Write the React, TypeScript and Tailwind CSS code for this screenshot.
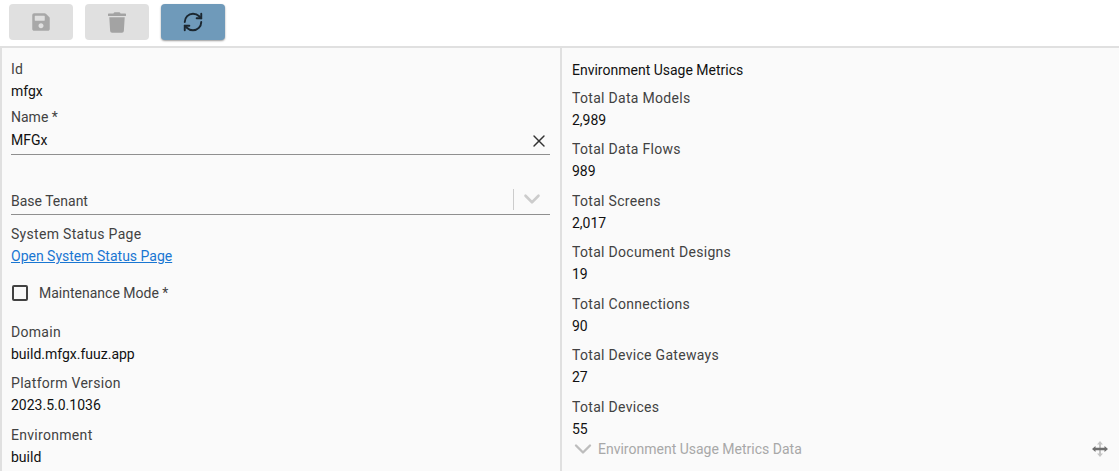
import React from 'react'
import { ChevronDown, RefreshCw, X } from 'lucide-react'

function SaveIcon () {
  return (
    <svg viewBox="0 0 448 512" className="h-[20px] w-[18px] fill-[#a8a8a8]">
      <path d="M433.9 129.9l-83.9-83.9A48 48 0 0 0 316.1 32H48C21.5 32 0 53.5 0 80v352c0 26.5 21.5 48 48 48h352c26.5 0 48-21.5 48-48V163.9a48 48 0 0 0-14.1-34zM224 416c-35.3 0-64-28.7-64-64 0-35.3 28.7-64 64-64s64 28.7 64 64c0 35.3-28.7 64-64 64zm96-304.5V212c0 6.6-5.4 12-12 12H76c-6.6 0-12-5.4-12-12V108c0-6.6 5.4-12 12-12h228.5c3.2 0 6.2 1.3 8.5 3.5l3.5 3.5c2.3 2.3 3.5 5.3 3.5 8.5z" />
    </svg>
  )
}

function TrashIcon () {
  return (
    <svg viewBox="0 0 448 512" className="h-[21px] w-[18px] fill-[#a3a3a3]">
      <path d="M432 32H312l-9.4-18.7A24 24 0 0 0 281.1 0H166.8a23.7 23.7 0 0 0-21.4 13.3L136 32H16A16 16 0 0 0 0 48v32a16 16 0 0 0 16 16h416a16 16 0 0 0 16-16V48a16 16 0 0 0-16-16zM53.2 467a48 48 0 0 0 47.9 45h245.8a48 48 0 0 0 47.9-45L416 128H32z" />
    </svg>
  )
}

function MoveIcon () {
  return (
    <svg viewBox="0 0 16 16" className="h-4 w-4">
      <path d="M8 0 11 3.5H9V12.5H11L8 16 5 12.5H7V3.5H5Z" fill="#c4c4c4" />
      <path d="M0 8 3.5 5V6.8H12.5V5L16 8 12.5 11V9.2H3.5V11Z" fill="#6e6e6e" />
    </svg>
  )
}

function Field ({ label, value, className = 'mb-[7.5px]' }: { label: string, value: string, className?: string }) {
  return (
    <div className={className}>
      <div className="h-[22px] leading-[22px] tracking-[0.3px] text-[#424242]">{label}</div>
      <div className="h-[22px] leading-[22px] text-[#111]">{value}</div>
    </div>
  )
}

const metrics = [
  ['Total Data Models', '2,989'],
  ['Total Data Flows', '989'],
  ['Total Screens', '2,017'],
  ['Total Document Designs', '19'],
  ['Total Connections', '90'],
  ['Total Device Gateways', '27'],
  ['Total Devices', '55']
]

export default function App () {
  return (
    <div className="flex h-[471px] w-[1119px] flex-col overflow-hidden bg-white font-['Roboto',sans-serif] text-[14px]">
      <div className="flex h-[46px] shrink-0 items-start gap-3 pl-[9px] pt-1">
        <button className="flex h-9 w-16 items-center justify-center rounded bg-[#e0e0e0]">
          <SaveIcon />
        </button>
        <button className="flex h-9 w-16 items-center justify-center rounded bg-[#e0e0e0]">
          <TrashIcon />
        </button>
        <button className="flex h-9 w-16 items-center justify-center rounded bg-[#6f9aba] shadow-[0_1px_2px_rgba(0,0,0,0.4)]">
          <RefreshCw size={22} strokeWidth={2.1} className="text-[#1b2730]" />
        </button>
      </div>

      <div className="flex min-h-0 flex-1 border-t-2 border-[#e0e0e0] bg-[#fafafa]">
        <div className="w-[562px] shrink-0 overflow-hidden border-x-2 border-[#e0e0e0] pl-[9px] pr-[10px] pt-[10px]">
          <Field label="Id" value="mfgx" className="mb-1" />

          <div className="h-[22px] leading-[22px] text-[#424242]">Name *</div>
          <div className="flex h-[27px] items-start justify-between border-b border-[#8f8f8f] pt-px">
            <span className="leading-[22px] text-[#111]">MFGx</span>
            <X size={20} strokeWidth={1.7} className="mr-px mt-[2px] text-[#333]" />
          </div>

          <div className="mt-[29px] flex h-[31px] items-center justify-between border-b border-[#8f8f8f]">
            <span className="pt-[4px] leading-[22px] text-[#424242]">Base Tenant</span>
            <div className="flex h-[21px] items-center border-l border-[#cccccc] px-[5px]">
              <ChevronDown size={26} strokeWidth={2.4} className="text-[#cccccc]" />
            </div>
          </div>

          <div className="mt-[8px] h-[22px] leading-[22px] tracking-[0.3px] text-[#424242]">System Status Page</div>
          <a href="#" className="block h-[22px] leading-[22px] text-[#1976d2] underline">Open System Status Page</a>

          <div className="mt-[15px] flex h-[22px] items-center">
            <div className="ml-px h-[16px] w-[16px] rounded-[2px] border-2 border-[#424242]" />
            <span className="ml-[11px] leading-[22px] text-[#424242]">Maintenance Mode *</span>
          </div>

          <div className="mt-[16.75px]">
            <Field label="Domain" value="build.mfgx.fuuz.app" />
            <Field label="Platform Version" value="2023.5.0.1036" />
            <Field label="Environment" value="build" />
          </div>
        </div>

        <div className="flex min-w-0 flex-1 flex-col pl-[10px] pr-[10px] pt-[11px]">
          <div className="mb-[5.75px] h-[22px] leading-[22px] text-[#111]">Environment Usage Metrics</div>
          <div className="h-[352px] overflow-hidden">
            {metrics.map(([label, value]) => (
              <Field key={label} label={label} value={value} />
            ))}
          </div>
          <div className="-mt-px flex h-[22px] items-center">
            <ChevronDown size={28} strokeWidth={2} className="-ml-[3px] shrink-0 text-[#bdbdbd]" />
            <span className="ml-px leading-[22px] text-[#a8a8a8]">Environment Usage Metrics Data</span>
            <div className="ml-auto mr-[1px]">
              <MoveIcon />
            </div>
          </div>
        </div>
      </div>
    </div>
  )
}
